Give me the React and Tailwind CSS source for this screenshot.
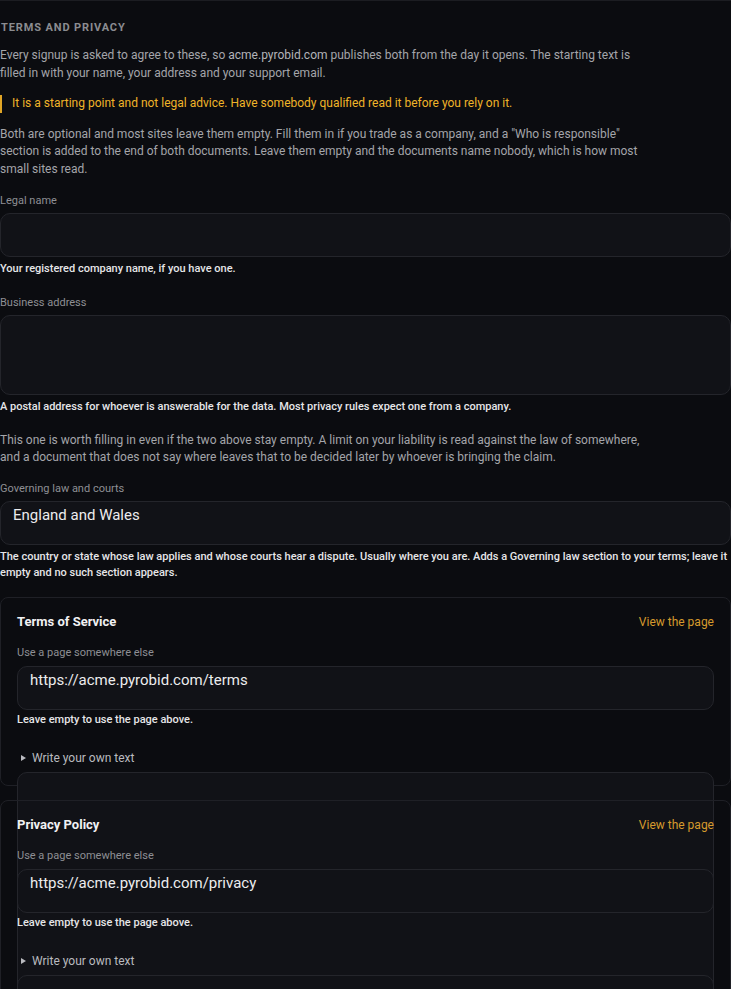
import React from 'react';

const font = { fontFamily: 'Roboto, "Liberation Sans", sans-serif' };

function Label({ children }) {
  return <div className="mb-[4px] text-[11px] leading-4 text-[#8e8f94]">{children}</div>;
}

function Help({ children, className = '' }) {
  return (
    <div className={`mt-[4px] text-[11px] font-medium leading-4 text-[#e6e6e8] ${className}`}>
      {children}
    </div>
  );
}

function Field({ value, className = 'h-[44px]' }) {
  return (
    <div
      className={`${className} w-full rounded-[10px] border border-[#24252b] bg-[#111217] px-3 pt-[3px] text-[15px] leading-5 text-[#ececee]`}
    >
      {value}
    </div>
  );
}

function Triangle() {
  return (
    <svg width="5" height="6" viewBox="0 0 5 6" className="mr-[6px]">
      <path d="M0 0 L5 3 L0 6 Z" fill="#b9babf" />
    </svg>
  );
}

function DocCard({ title, url, className = '', textareaClass = 'h-[60px]' }) {
  return (
    <div className={`rounded-lg border border-[#1f2026] px-4 pt-[15px] ${className}`}>
      <div className="flex items-center justify-between">
        <div className="text-[13px] font-bold leading-[18px] text-[#f1f1f3]">{title}</div>
        <a className="text-[12px] leading-[18px] text-[#d69a2d]">View the page</a>
      </div>
      <div className="mt-[14px]">
        <div className="mb-[5px] text-[11px] leading-4 text-[#8e8f94]">Use a page somewhere else</div>
        <Field value={url} />
        <div className="mt-[2px] text-[11px] font-medium leading-4 text-[#e6e6e8]">
          Leave empty to use the page above.
        </div>
      </div>
      <div className="mt-[22px] flex items-center pl-1 text-[12px] leading-4 text-[#b9babf]">
        <Triangle />
        Write your own text
      </div>
      <div className={`mt-[6px] w-full rounded-[10px] border border-[#24252b] bg-[#111217] ${textareaClass}`} />
    </div>
  );
}

export default function App() {
  return (
    <div className="min-h-screen bg-[#0b0c10]" style={font}>
      <div className="h-[989px] overflow-hidden border-t border-[#1c1d22] pt-[19px]">
        {/* Heading */}
        <h2 className="pl-px text-[11px] font-bold uppercase leading-4 tracking-[0.08em] text-[#8b8c91]">
          Terms and privacy
        </h2>

        <p className="mt-[11px] max-w-[640px] text-[12px] leading-[17.6px] text-[#a4a5aa]">
          Every signup is asked to agree to these, so <span className="text-[#b3b4b9]">acme.pyrobid.com</span> publishes both from the day it opens. The starting text is filled in with your name, your address and your support email.
        </p>

        <div className="mt-[13px] border-l-2 border-[#e0a526] pl-[10px] text-[12px] leading-[17.6px] text-[#f0b429]">
          It is a starting point and not legal advice. Have somebody qualified read it before you rely on it.
        </div>

        <p className="mt-[13px] max-w-[640px] text-[12px] leading-[17.6px] text-[#a4a5aa]">
          Both are optional and most sites leave them empty. Fill them in if you trade as a company, and a "Who is responsible" section is added to the end of both documents. Leave them empty and the documents name nobody, which is how most small sites read.
        </p>

        {/* Legal name */}
        <div className="mt-[14px]">
          <Label>Legal name</Label>
          <Field value="" />
          <Help>Your registered company name, if you have one.</Help>
        </div>

        {/* Business address */}
        <div className="mt-[18px]">
          <Label>Business address</Label>
          <Field value="" className="h-[80px]" />
          <Help>A postal address for whoever is answerable for the data. Most privacy rules expect one from a company.</Help>
        </div>

        <p className="mt-[17px] max-w-[640px] text-[12px] leading-[17.6px] text-[#a4a5aa]">
          This one is worth filling in even if the two above stay empty. A limit on your liability is read against the law of somewhere, and a document that does not say where leaves that to be decided later by whoever is bringing the claim.
        </p>

        {/* Governing law */}
        <div className="mt-[14px]">
          <Label>Governing law and courts</Label>
          <Field value="England and Wales" />
          <Help>
            The country or state whose law applies and whose courts hear a dispute. Usually where you are. Adds a Governing law section to your terms; leave it empty and no such section appears.
          </Help>
        </div>

        {/* Documents */}
        <DocCard
          title="Terms of Service"
          url="https://acme.pyrobid.com/terms"
          className="mt-[16px] h-[189px] bg-[#0b0c10]"
          textareaClass="h-[260px]"
        />
        <DocCard
          title="Privacy Policy"
          url="https://acme.pyrobid.com/privacy"
          className="mt-[14px]"
          textareaClass="h-[80px]"
        />
      </div>
    </div>
  );
}
